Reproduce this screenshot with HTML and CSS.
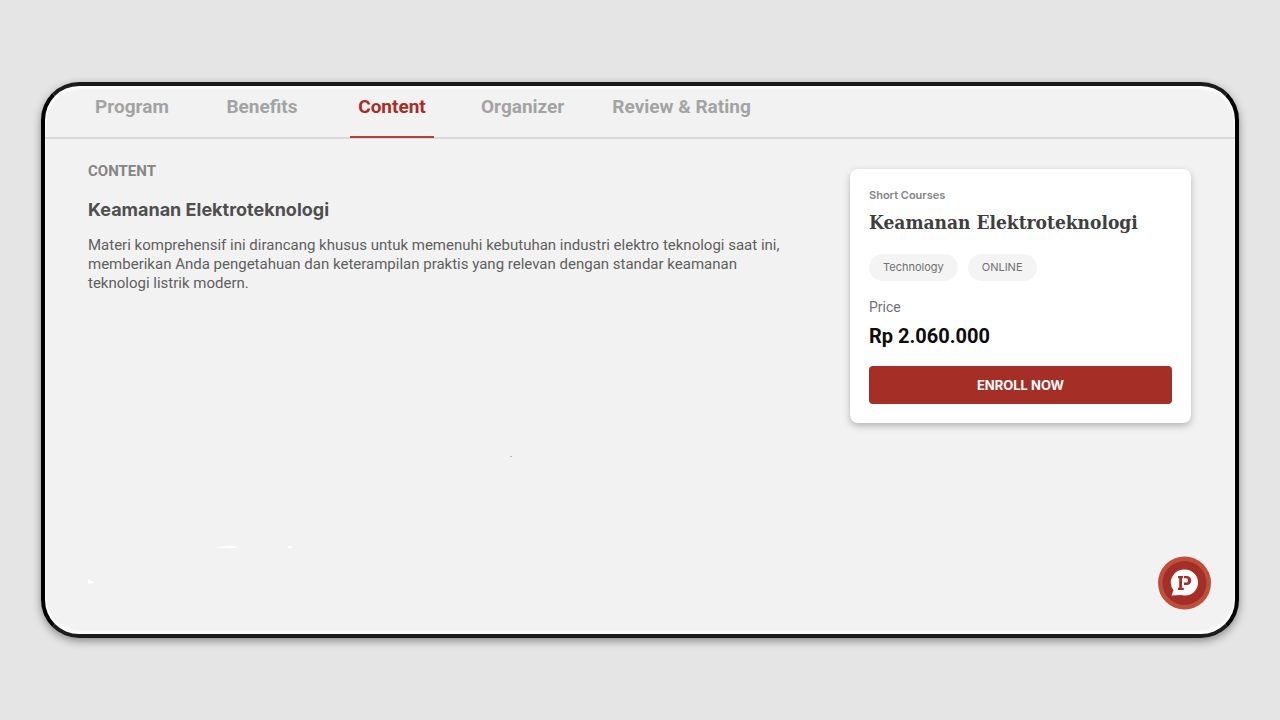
FILE: index.html
```html
<!DOCTYPE html>
<html lang="id">
<head>
<meta charset="utf-8">
<meta name="viewport" content="width=device-width, initial-scale=1">
<title>Keamanan Elektroteknologi</title>
<link rel="stylesheet" href="styles.css">
</head>
<body>
<div class="frame">
  <nav class="tabs">
    <a class="tab" href="#program"><span class="tab-label">Program</span></a>
    <a class="tab" href="#benefits"><span class="tab-label">Benefits</span></a>
    <a class="tab tab-active" href="#content" aria-current="page"><span class="tab-label">Content</span></a>
    <a class="tab" href="#organizer"><span class="tab-label">Organizer</span></a>
    <a class="tab" href="#review"><span class="tab-label">Review &amp; Rating</span></a>
  </nav>
  <main class="layout">
    <section class="content" id="content">
      <h2 class="eyebrow">CONTENT</h2>
      <h3 class="title">Keamanan Elektroteknologi</h3>
      <p class="text">Materi komprehensif ini dirancang khusus untuk memenuhi kebutuhan industri elektro teknologi saat ini, memberikan Anda pengetahuan dan keterampilan praktis yang relevan dengan standar keamanan teknologi listrik modern.</p>
    </section>
    <aside class="card">
      <p class="card-kind">Short Courses</p>
      <h1 class="card-title">Keamanan Elektroteknologi</h1>
      <div class="tags">
        <span class="tag">Technology</span>
        <span class="tag">ONLINE</span>
      </div>
      <p class="price-label">Price</p>
      <p class="price">Rp 2.060.000</p>
      <button class="enroll" type="button">ENROLL NOW</button>
    </aside>
  </main>
  <svg class="glints" viewBox="0 0 428 132" aria-hidden="true">
    <path d="M128 91.500l12-1.500h10l-3 2h-8zM199 91l3-1.500 3 1.500-3 1z" fill="#fff"/>
    <path d="M0 123l7 4-7 1z" fill="#fff"/>
    <path d="M422 0h2v1h-2z" fill="#b5b5b5"/>
  </svg>
  <button class="chat" type="button" aria-label="Chat">
    <svg class="chat-icon" viewBox="0 0 54 54" aria-hidden="true">
      <circle cx="26.500" cy="27" r="26.500" fill="#be4f3d"/>
      <circle cx="26.500" cy="27" r="22" fill="#a52e26"/>
      <path d="M27 13.500a13 13 0 1 1-3.500 25.500L13.500 39.500l2-5.200A13 13 0 0 1 27 13.500z" fill="#fff"/>
      <path d="M20 20h5v2.200h-1v9.600h1.800V34H20v-2.200h1.200v-9.600H20zM26 20h2.500c3 0 4.700 1.800 4.700 4.400S31.500 29 28.500 29H26v-2.400h2c1.400 0 2-.8 2-2.200s-.6-2.100-2-2.100h-2z" fill="#a52e26"/>
    </svg>
  </button>
</div>
</body>
</html>
```
FILE: styles.css
```css
* {
  box-sizing: border-box;
}

body {
  margin: 0;
  min-height: 100vh;
  padding: 82px 41px;
  display: flex;
  background: #e5e5e5;
  font-family: Roboto, "Liberation Sans", sans-serif;
}

h1, h2, h3, p {
  margin: 0;
}

.frame {
  position: relative;
  flex: 1;
  min-width: 0;
  border: 4px solid #000;
  border-top-color: #1c1c1c;
  border-bottom-color: #1c1c1c;
  border-radius: 38px;
  background: #f2f2f2;
  box-shadow: 0 3px 8px rgba(0, 0, 0, 0.4), inset 0 3px 3px #fff, inset 0 -3px 3px #fff;
}

.tabs {
  display: flex;
  height: 53px;
  padding-left: 22px;
  border-bottom: 2px solid #d9d9d9;
}

.tab {
  display: flex;
  justify-content: center;
  min-width: 130px;
  height: 52px;
  padding: 0 16px;
  color: #a3a3a3;
  font-size: 19px;
  font-weight: 700;
  line-height: 42px;
  text-decoration: none;
}

.tab-label {
  padding: 0 8px;
  white-space: nowrap;
  border-bottom: 2px solid transparent;
}

.tab-active {
  color: #a52e26;
}

.tab-active .tab-label {
  border-color: #b04038;
}

.layout {
  display: grid;
  grid-template-columns: minmax(0, 1fr) 341px;
  gap: 42px;
  align-items: start;
  padding: 30px 44px 0 43px;
}

.eyebrow {
  margin-top: -8px;
  color: #858585;
  font-size: 15px;
  line-height: 20px;
}

.title {
  margin-top: 17px;
  color: #4f4f4f;
  font-family: Inter, Roboto, sans-serif;
  font-size: 18px;
  line-height: 24px;
}

.text {
  max-width: 710px;
  margin-top: 14px;
  color: #5f5f5f;
  font-size: 15px;
  line-height: 19px;
}

.card {
  padding: 18px 19px 19px;
  border-radius: 8px;
  background: #fff;
  box-shadow: 0 3px 7px rgba(0, 0, 0, 0.25);
}

.card-kind {
  color: #858585;
  font-family: Inter, Roboto, sans-serif;
  font-size: 11px;
  font-weight: 600;
  line-height: 16px;
}

.card-title {
  margin-top: 5px;
  color: #3f3f3f;
  font-family: "DejaVu Serif Condensed", "DejaVu Serif", serif;
  font-size: 19px;
  font-weight: 700;
  line-height: 28px;
  white-space: nowrap;
}

.tags {
  display: flex;
  gap: 10px;
  margin-top: 18px;
}

.tag {
  padding: 0 14px;
  border-radius: 14px;
  background: #f4f4f4;
  color: #707070;
  font-family: Inter, Roboto, sans-serif;
  font-size: 11px;
  line-height: 27px;
}

.price-label {
  margin-top: 18px;
  color: #707070;
  font-size: 14px;
  line-height: 16px;
}

.price {
  margin-top: 9px;
  color: #0c0c0c;
  font-size: 20px;
  font-weight: 700;
  line-height: 24px;
}

.enroll {
  width: 100%;
  height: 38px;
  margin-top: 18px;
  padding: 0;
  border: 0;
  border-radius: 4px;
  background: #a52e26;
  color: #fff;
  font: 700 13px Inter, Roboto, sans-serif;
}

.glints {
  position: absolute;
  left: 43px;
  bottom: 46px;
  width: 428px;
  height: 132px;
}

.chat {
  position: absolute;
  right: 23px;
  bottom: 24px;
  width: 54px;
  height: 54px;
  padding: 0;
  border: 0;
  border-radius: 50%;
  background: none;
}

.chat-icon {
  display: block;
  width: 54px;
  height: 54px;
}
```
